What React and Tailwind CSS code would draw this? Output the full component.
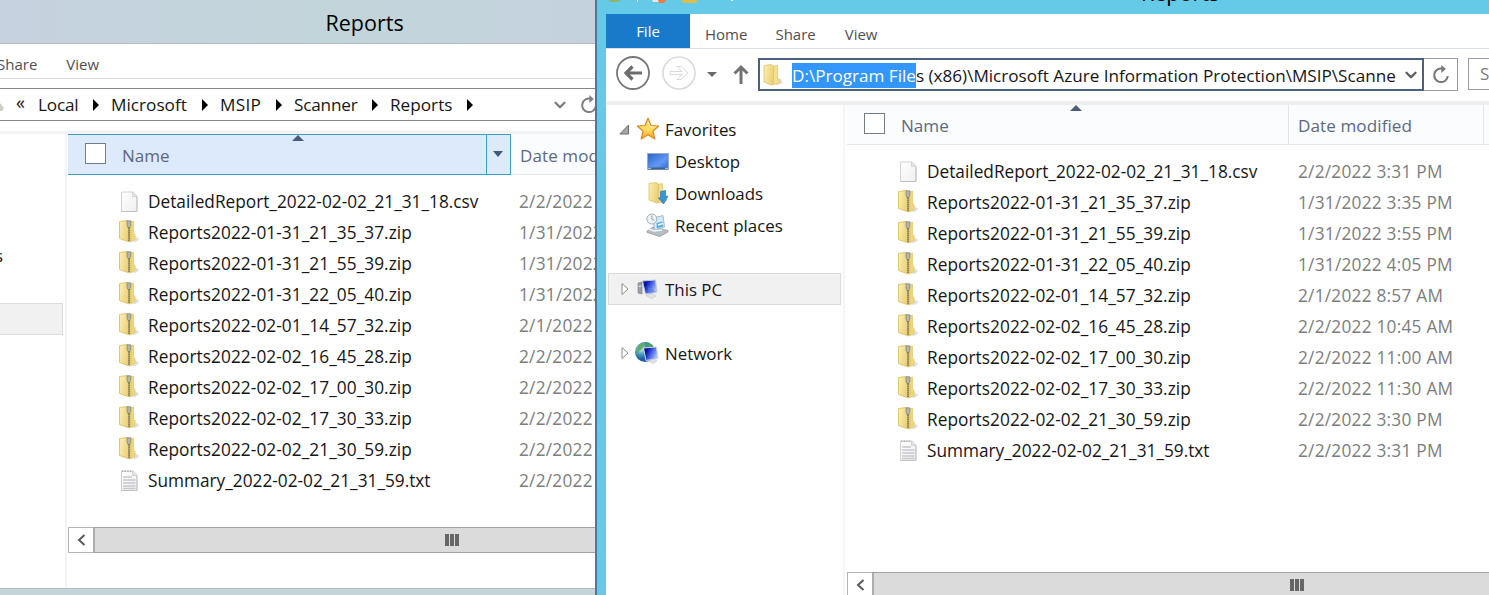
import { ChevronDown } from 'lucide-react'

const zips = [
  ['Reports2022-01-31_21_35_37.zip', '1/31/2022 3:35 PM'],
  ['Reports2022-01-31_21_55_39.zip', '1/31/2022 3:55 PM'],
  ['Reports2022-01-31_22_05_40.zip', '1/31/2022 4:05 PM'],
  ['Reports2022-02-01_14_57_32.zip', '2/1/2022 8:57 AM'],
  ['Reports2022-02-02_16_45_28.zip', '2/2/2022 10:45 AM'],
  ['Reports2022-02-02_17_00_30.zip', '2/2/2022 11:00 AM'],
  ['Reports2022-02-02_17_30_33.zip', '2/2/2022 11:30 AM'],
  ['Reports2022-02-02_21_30_59.zip', '2/2/2022 3:30 PM'],
]

const files = [
  { name: 'DetailedReport_2022-02-02_21_31_18.csv', date: '2/2/2022 3:31 PM', type: 'csv' },
  ...zips.map(([name, date]) => ({ name, date, type: 'zip' })),
  { name: 'Summary_2022-02-02_21_31_59.txt', date: '2/2/2022 3:31 PM', type: 'txt' },
]

const Gradients = () => (
  <svg width="0" height="0" className="absolute">
    <defs>
      <linearGradient id="folder" x1="0" x2="1" y1="0" y2="0.4">
        <stop offset="0" stopColor="#fbf1b4" />
        <stop offset="1" stopColor="#ecd076" />
      </linearGradient>
      <linearGradient id="page" x1="0" x2="1" y1="0" y2="1">
        <stop offset="0" stopColor="#ffffff" />
        <stop offset="1" stopColor="#efefef" />
      </linearGradient>
      <linearGradient id="screen" x1="0" x2="1" y1="0" y2="1">
        <stop offset="0" stopColor="#2a62c6" />
        <stop offset="0.6" stopColor="#6199f2" />
        <stop offset="1" stopColor="#2f66cc" />
      </linearGradient>
      <linearGradient id="monitor" x1="0" x2="1" y1="0" y2="0.5">
        <stop offset="0.3" stopColor="#0a12a0" />
        <stop offset="0.5" stopColor="#2a45d8" />
        <stop offset="1" stopColor="#a9c4f8" />
      </linearGradient>
      <linearGradient id="star" x1="0" x2="0" y1="0" y2="1">
        <stop offset="0" stopColor="#ffd25c" />
        <stop offset="0.55" stopColor="#ffdf62" />
        <stop offset="1" stopColor="#f79a1d" />
      </linearGradient>
      <radialGradient id="globe" cx="0.3" cy="0.35">
        <stop offset="0" stopColor="#d8f2ee" />
        <stop offset="0.5" stopColor="#4f9fc4" />
        <stop offset="1" stopColor="#1c5f9d" />
      </radialGradient>
    </defs>
  </svg>
)

const PageIcon = ({ lines }) => (
  <svg width="22" height="24" viewBox="0 0 22 24" className="shrink-0">
    <path d="M3.5 2h11.500l4 4v15.500h-15.500z" fill="url(#page)" stroke="#d0d2d4" />
    <path d="M3.5 21.500h15.500M19 7v14" stroke="#b9bcbf" strokeWidth="0.8" />
    <path d="M14.500 2v4.500H19" fill="#e4e5e7" stroke="#cacccf" strokeWidth="0.8" />
    {lines && (
      <>
        <path d="M5 8h9M5 11h12.500M5 14h12.500M5 17h12.500M5 19.500h12.500" stroke="#c3c8ce" strokeWidth="1.3" />
        <path d="M4 2.300h10" stroke="#a9aeb3" strokeWidth="1.6" strokeDasharray="1.4 1.2" />
      </>
    )}
  </svg>
)

const ZipIcon = () => (
  <svg width="22" height="24" viewBox="0 0 22 24" className="mb-[3px] shrink-0">
    <path d="M12 22l5-5 4.500 3-4 3z" fill="#c9c9c6" opacity="0.6" />
    <path d="M12 3l3.500-1v12l1.500 1.500v5l-5 2.500z" fill="#f0d878" stroke="#dfc56c" strokeWidth="0.7" />
    <path d="M1.500 2.500l7-.9 3 1v20.400l-10-3.500z" fill="url(#folder)" stroke="#dcc168" strokeWidth="0.9" />
    <path d="M9 1.800h3.800v4.200l-.9 2.500h-2L9 6z" fill="#b4b5ae" stroke="#7d7e77" strokeWidth="0.7" />
    <path d="M11 8.500v14" stroke="#6a6a5e" strokeWidth="1.800" strokeDasharray="1.300 0.7" />
    <path d="M13 7v15" stroke="#e1c66a" strokeWidth="0.9" />
  </svg>
)

const FolderIcon = ({ download }) => (
  <svg width="24" height="24" viewBox="0 0 24 24" className="shrink-0">
    <path d="M12 20l7-5 3 5-6 2z" fill="#c6c6c2" opacity="0.6" />
    <path d="M11 3.500l5.500-1v13l2 1v4l-6.500 1z" fill="#f3df90" stroke="#dfc778" strokeWidth="0.8" />
    <path d="M3 2.500l7-1 2.500 1.500v18.500l-2 .5-7.500-3z" fill="url(#folder)" stroke="#dcc272" strokeWidth="0.8" />
    {download && <path d="M14.500 10.500l5-1v6l2.500-.5-4.500 8-5-6 2-.3z" fill="#3a96cf" stroke="#2378b4" strokeWidth="0.7" />}
  </svg>
)

const StarIcon = () => (
  <svg width="24" height="24" viewBox="0 0 24 24" className="shrink-0">
    <path d="M12 1.300l3 7.200 7.700.5-5.800 5.200 2 7.700-6.900-4.200-6.800 4.200 1.900-7.700L1.300 9l7.700-.5z" fill="url(#star)" stroke="#dc8a26" strokeWidth="1.200" strokeLinejoin="round" />
    <path d="M12 4.500l2 5.300 5 .4" stroke="#fff3bd" fill="none" />
  </svg>
)

const DesktopIcon = () => (
  <svg width="24" height="24" viewBox="0 0 24 24" className="shrink-0">
    <path d="M1.500 4.500h21v16h-21z" fill="url(#screen)" stroke="#98aac4" />
    <path d="M2 18.500h20v2H2z" fill="#41618f" />
    <path d="M2 19.300h3M19 19.300h3" stroke="#b7d0e8" />
  </svg>
)

const RecentIcon = () => (
  <svg width="24" height="24" viewBox="0 0 24 24" className="shrink-0">
    <path d="M1 18l6-4 15 3.500v1.500l-8 4.500-13-4z" fill="#b7bdc3" stroke="#8d959c" strokeWidth="0.7" />
    <path d="M7 5l10-2.500 1.500 11.500-10 3.500z" fill="#d3eaf6" stroke="#8badbf" strokeWidth="0.8" />
    <path d="M10.500 10l6-1.500.8 5-6.500 2z" fill="#5aaedb" />
    <path d="M12 12l5-1.500M3 16l5 2 8-1" stroke="#f2f8fb" strokeWidth="1.500" fill="none" />
    <circle cx="5.800" cy="6" r="5" fill="#edf2f5" stroke="#a6b1b9" />
    <path d="M5.800 2.500V6l2.500 1.200" stroke="#7e8d98" strokeWidth="0.8" fill="none" />
  </svg>
)

const PcIcon = () => (
  <svg width="24" height="24" viewBox="0 0 24 24" className="shrink-0">
    <path d="M2 6l4-1v12l-4-1z" fill="#9aa3ad" stroke="#727c88" strokeWidth="0.6" />
    <path d="M2.500 9.500l3-.5" stroke="#e6eaee" />
    <path d="M10 18.500l6-2 4 2.500-4.500 2.500z" fill="#dfe2e6" stroke="#c0c5ca" strokeWidth="0.6" />
    <path d="M6.500 4l13-1 1.500 12-11.500 2z" fill="url(#monitor)" stroke="#c0c8d8" />
    <path d="M14 16.500l-2.500-6.500 8.500 4.500z" fill="#5c78e6" opacity="0.6" />
  </svg>
)

const NetworkIcon = () => (
  <svg width="26" height="24" viewBox="0 0 26 24" className="shrink-0">
    <circle cx="11" cy="11" r="10" fill="url(#globe)" />
    <path d="M3 8c1-4 5-6.500 8-6 2 1-1 3-2 4s-1 3-3 3.500-1 3-2 3.500S3 10 3 8z" fill="#62ad66" />
    <path d="M13 1.500c3 0 6 2 7 5l-4 1-3-2z" fill="#4e9f63" />
    <path d="M14 20l6-2 3 2-4 2.500z" fill="#dfe2e6" stroke="#c0c5ca" strokeWidth="0.600" />
    <path d="M9.500 7l13-1 1.500 11.500-12 2z" fill="url(#monitor)" stroke="#cdd4e2" />
  </svg>
)

const Refresh = ({ className }) => (
  <svg width="18" height="20" viewBox="0 0 18 20" className={className}>
    <path d="M11 3.800A6.800 6.800 0 1 0 15.800 11" fill="none" stroke="currentColor" strokeWidth="2" />
    <path d="M9.300 0l4.500 4-4.500 4z" fill="currentColor" />
  </svg>
)

const Arrow = () => (
  <svg width="19" height="12" viewBox="0 0 19 12" className="shrink-0">
    <path d="M1 0l6 6-6 6z" fill="#000" />
  </svg>
)

const Crumbs = () => (
  <div className="flex items-center whitespace-pre text-[17.200px] text-[#161616]">
    <span className="w-[22px] pb-1 text-[18px]">«</span>
    <span className="w-[54px] tracking-[-0.2px]">Local</span>
    <Arrow />
    <span className="w-[90px]">Microsoft</span>
    <Arrow />
    <span className="w-[55px] tracking-[0.3px]">MSIP</span>
    <Arrow />
    <span className="w-[77px] tracking-[-0.2px]">Scanner</span>
    <Arrow />
    <span className="w-[76px]">Reports</span>
    <Arrow />
  </div>
)

const SortMark = () => (
  <svg width="12" height="6" viewBox="0 0 12 6">
    <path d="M0 6l6-6 6 6z" fill="#4c5b76" />
  </svg>
)

const Checkbox = () => <span className="mb-0.5 size-[21px] shrink-0 border border-[#747c88] bg-white" />

const FileRow = ({ file }) => (
  <li className="flex h-[31px] items-center whitespace-nowrap text-[17.250px]">
    {file.type === 'zip' ? <ZipIcon /> : <PageIcon lines={file.type === 'txt'} />}
    <span className={`w-[379px] shrink-0 pl-2 text-[#161616] ${file.type === 'zip' ? 'tracking-[0.060px]' : ''}`}>{file.name}</span>
    <span className="tracking-[0.240px] text-[#7d7d7d]">{file.date}</span>
  </li>
)

const FileList = () => (
  <ul>
    {files.map((file) => (
      <FileRow key={file.name} file={file} />
    ))}
  </ul>
)

const Scrollbar = ({ gripClass }) => (
  <div className="flex h-[26px] shrink-0">
    <div className="flex w-[25px] shrink-0 items-center justify-center border border-r-0 border-[#b4b4b4] bg-white">
      <svg width="9" height="12" viewBox="0 0 9 12">
        <path d="M7.500 1L2 6l5.500 5" fill="none" stroke="#595959" strokeWidth="2" />
      </svg>
    </div>
    <div className={`flex flex-1 items-center gap-px border-y border-l-2 border-y-[#a3a3a3] border-l-[#adadad] bg-[#dbdbdb] ${gripClass}`}>
      <span className="h-3 w-1 bg-[#666]" />
      <span className="h-3 w-1 bg-[#666]" />
      <span className="h-3 w-1 bg-[#666]" />
    </div>
  </div>
)

const BackWindow = () => (
  <section className="flex w-[595px] shrink-0 flex-col overflow-hidden bg-white">
    <header className="flex h-11 shrink-0 items-center border-b border-[#b3bcc2] bg-linear-to-r from-[#c6d2df] via-[#c2d5da] via-55% to-[#c5d2de] pb-px pl-[325.500px] pt-1 text-[21.500px] text-black">
      Reports
    </header>
    <nav className="flex h-[35px] shrink-0 items-center gap-7 border-b border-[#dcdfe4] pt-1.5 text-[15px] text-[#505050]">
      <span className="-ml-[3px]">Share</span>
      <span className="pl-px">View</span>
    </nav>
    <div className="mt-[9px] flex h-[33px] shrink-0 items-center border-y border-[#868686]">
      <svg width="16" height="14" viewBox="0 0 16 14" className="shrink-0">
        <path d="M0 5l4 5-2 3H0z" fill="#cfcec3" />
      </svg>
      <Crumbs />
      <span className="flex-1" />
      <ChevronDown size={18} strokeWidth={3} className="mr-[11px] shrink-0 text-[#7b7b7b]" />
      <Refresh className="-mr-[3px] shrink-0 text-[#808080]" />
    </div>
    <div className="mt-[10px] h-[3px] shrink-0 bg-[#f2f3f4]" />
    <div className="flex flex-1">
      <aside className="w-[67px] shrink-0 border-r-2 border-[#f4f5f6]">
        <div className="-ml-[5px] mt-[109px] h-[26px] text-[16.800px] text-[#161616]">s</div>
        <div className="mt-[34px] h-8 w-[63px] border border-l-0 border-[#dcdcdc] bg-[#f1f1f1]" />
      </aside>
      <div className="flex min-w-0 flex-1 flex-col pl-px">
        <div className="flex h-[41px] shrink-0 text-[17px] text-[#5b6880]">
          <div className="relative flex w-[419px] shrink-0 items-center gap-[16px] border border-l-0 border-[#3d9fc6] bg-[#dceafc] pl-[17px]">
            <Checkbox />
            <span className="pt-0.5">Name</span>
            <span className="absolute left-[224px] top-0 flex"><SortMark /></span>
          </div>
          <div className="flex w-6 shrink-0 items-center justify-center border border-l-0 border-[#3d9fc6] bg-[#dceafc] pb-0.5 pr-0.5">
            <svg width="10" height="6" viewBox="0 0 10 6"><path d="M0 0h10L5 6z" fill="#40597c" /></svg>
          </div>
          <div className="flex flex-1 items-center overflow-hidden whitespace-nowrap border-b border-[#e6e8ec] bg-[#fbfcfd] pl-[9px] pt-[3px] tracking-[0.1px]">
            Date modified
          </div>
        </div>
        <div className="h-[352px] shrink-0 overflow-hidden pl-[50px] pt-[11px]">
          <FileList />
        </div>
        <Scrollbar gripClass="pl-[350px]" />
      </div>
    </div>
    <footer className="h-[7px] shrink-0 border-t border-[#aebdc2] bg-[#c3d5da]" />
  </section>
)

const NavRow = ({ icon, label, toggle, nested, selected }) => (
  <div className={`flex h-8 items-center whitespace-nowrap text-[16.900px] text-[#161616] ${selected ? 'border border-[#dadada] bg-[#f1f1f1] pl-[10px]' : 'pl-[11px]'}`}>
    <span className={nested ? 'w-[28px] shrink-0' : 'w-[18px] shrink-0'}>
      {toggle === 'open' && (
        <svg width="11" height="11" viewBox="0 0 11 11"><path d="M9.500 1v9H.8z" fill="#a6a6a6" stroke="#6e6e6e" /></svg>
      )}
      {toggle === 'closed' && (
        <svg width="11" height="14" viewBox="0 0 11 14"><path d="M3 1.500L9 7l-6 5.500z" fill="#fff" stroke="#8a8a8a" /></svg>
      )}
    </span>
    <span className="-ml-px flex w-[28px] shrink-0">{icon}</span>
    <span className="pl-px pt-px">{label}</span>
  </div>
)

const Sidebar = () => (
  <aside className="w-[239px] shrink-0 border-r-2 border-[#f4f5f6] px-0.5 pt-2">
    <NavRow toggle="open" icon={<StarIcon />} label="Favorites" />
    <NavRow nested icon={<DesktopIcon />} label="Desktop" />
    <NavRow nested icon={<FolderIcon download />} label="Downloads" />
    <NavRow nested icon={<RecentIcon />} label="Recent places" />
    <div className="h-8" />
    <NavRow toggle="closed" selected icon={<PcIcon />} label="This PC" />
    <div className="h-8" />
    <NavRow toggle="closed" icon={<span className="-ml-0.5 flex"><NetworkIcon /></span>} label="Network" />
  </aside>
)

const Toolbar = () => (
  <div className="flex h-[52px] shrink-0 items-start pl-[9px] pt-[7px]">
    <svg width="36" height="36" viewBox="0 0 36 36" className="shrink-0">
      <circle cx="18" cy="17" r="16" fill="#fff" stroke="#777" strokeWidth="1.800" />
      <path d="M27 17H12M17.500 10.500L11 17l6.500 6.500" fill="none" stroke="#6d6d6d" strokeWidth="3.200" />
    </svg>
    <svg width="36" height="36" viewBox="0 0 36 36" className="ml-[10px] shrink-0">
      <circle cx="18" cy="17" r="16" fill="#fff" stroke="#dadada" strokeWidth="1.600" />
      <path d="M9 15.500h12l-5-5h4l7 6.500-7 6.500h-4l5-5H9z" fill="#fff" stroke="#dadada" />
    </svg>
    <svg width="10" height="6" viewBox="0 0 10 6" className="ml-[10px] mt-4 shrink-0">
      <path d="M0 0h10L5 5z" fill="#6c6c6c" />
    </svg>
    <svg width="18" height="22" viewBox="0 0 18 22" className="ml-[15px] mt-2 shrink-0">
      <path d="M9 20V3M2.500 9.500L9 3l6.500 6.500" fill="none" stroke="#727272" strokeWidth="3" />
    </svg>
    <div className="ml-2 mt-[2px] flex h-[33px] w-[666px] shrink-0 items-center border-2 border-[#4a627f] bg-white">
      <span className="ml-px flex w-[31px] shrink-0"><FolderIcon /></span>
      <span className="whitespace-pre pt-px text-[17.120px] leading-[25px] text-[#161616]">
        <mark className="inline-block h-[25px] bg-[#3296fb] text-white">D:\Program File</mark>s (x86)\Microsoft Azure Information Protection\MSIP\Scanne
      </span>
      <ChevronDown size={18} strokeWidth={3.200} className="ml-1.5 shrink-0 text-[#5f5f5f]" />
    </div>
    <div className="mt-[2px] flex h-[33px] w-[34px] shrink-0 items-center justify-center border border-l-0 border-[#9b9b9b] text-[#777]">
      <Refresh />
    </div>
    <div className="ml-[10px] mt-[2px] flex h-[32px] w-[60px] shrink-0 items-center border border-[#9b9b9b] pl-[11px] text-[17px] text-[#7c7c7c]">
      Search
    </div>
  </div>
)

const FrontWindow = () => (
  <section className="flex min-w-0 flex-1 flex-col overflow-hidden border-l-2 border-[#41808f] bg-[#65c9e8] pl-[9px]">
    <header className="relative h-[14px] shrink-0 overflow-hidden">
      <svg width="130" height="4" viewBox="0 0 130 4" className="absolute left-0 top-0">
        <path d="M3 0h11v1l-3 1H4z" fill="#8fb56a" />
        <path d="M31 0h1v2h-1z" fill="#d4f0f8" />
        <path d="M46 0h12l-3 2h-8z" fill="#e9e6e4" />
        <path d="M52 0h8l-2 3h-5z" fill="#ee7a43" />
        <path d="M75 0h15l2 1-2 2H77z" fill="#d8bd50" />
        <path d="M125 0h2v1h-2z" fill="#d4f0f8" />
      </svg>
      <span className="absolute left-[535px] top-[-22px] text-[21.500px] leading-[30px] text-black">Reports</span>
    </header>
    <div className="flex min-h-0 flex-1 flex-col bg-white">
      <nav className="flex h-[35px] shrink-0 border-b border-[#dbe1ea] text-[15px] text-[#505050]">
        <span className="flex h-[34px] w-[84px] items-center justify-center bg-[#1979ca] text-white">File</span>
        <span className="ml-[15px] mt-[9px]">Home</span>
        <span className="ml-[28px] mt-[9px]">Share</span>
        <span className="ml-[29px] mt-[9px]">View</span>
      </nav>
      <Toolbar />
      <div className="h-1 shrink-0 bg-[#efeff0]" />
      <div className="flex min-h-0 flex-1">
        <Sidebar />
        <div className="flex min-w-0 flex-1 flex-col pl-0.5">
          <div className="flex h-10 shrink-0 whitespace-nowrap border-b border-[#e4e7eb] bg-[#fbfcfd] text-[17.100px] text-[#5b6880]">
            <div className="relative flex w-[442px] shrink-0 items-center gap-4 border-r border-[#e2e4e8] pl-[17px]">
              <Checkbox />
              <span className="pt-0.5">Name</span>
              <span className="absolute left-[223px] top-0 flex"><SortMark /></span>
            </div>
            <div className="flex w-[195px] shrink-0 items-center border-r border-[#e2e4e8] pl-[9px] pt-0.5 tracking-[0.080px]">Date modified</div>
          </div>
          <div className="h-[427px] shrink-0 overflow-hidden pl-[50px] pt-[11px]">
            <FileList />
          </div>
          <Scrollbar gripClass="pl-[416px]" />
        </div>
      </div>
    </div>
  </section>
)

const App = () => (
  <main className="relative flex h-[595px] w-[1489px] overflow-hidden bg-white font-['Open_Sans',sans-serif]">
    <Gradients />
    <BackWindow />
    <FrontWindow />
  </main>
)

export default App
